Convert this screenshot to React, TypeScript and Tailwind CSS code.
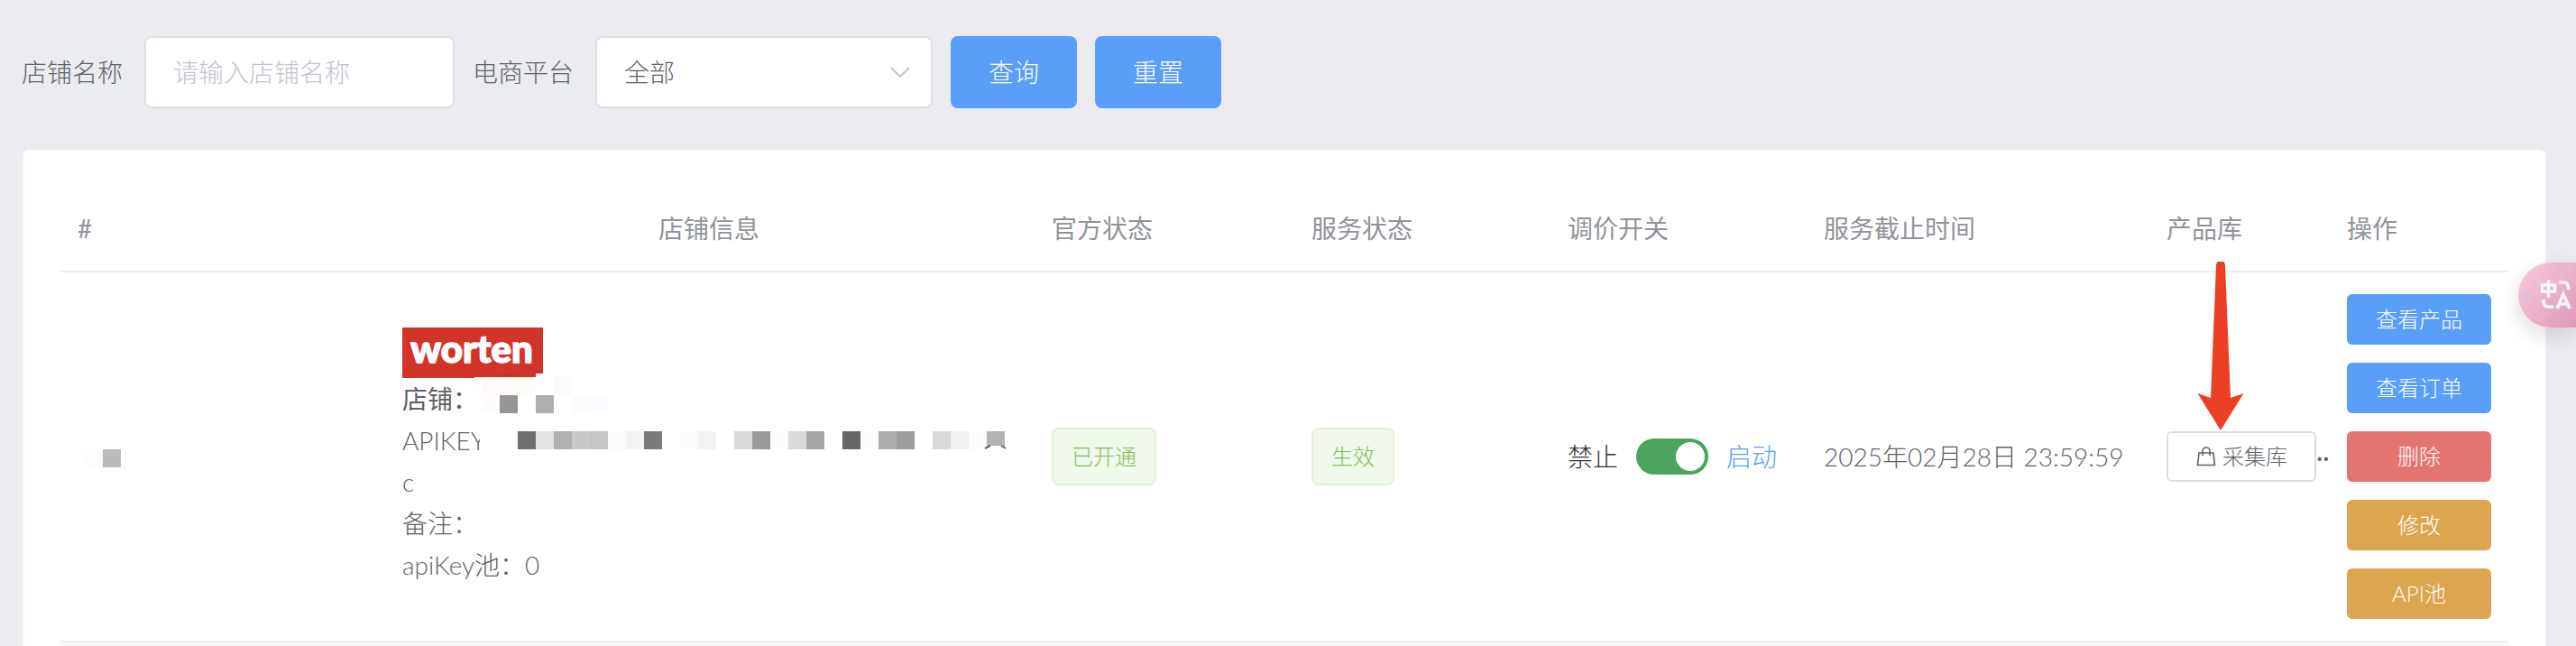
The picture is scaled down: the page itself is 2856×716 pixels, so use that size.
import { useState } from "react";
import type { ReactNode } from "react";

type Pixel = [x: number, y: number, fill: string];

const shopPixels: Pixel[] = [
  [88, 55, "#fff9f7"],
  [108, 55, "#fff9f7"],
  [128, 55, "#fdfdf7"],
  [168, 55, "#fbfbfb"],
  [88, 75, "#fcfcff"],
  [108, 75, "#969698"],
  [148, 75, "#aeaeb0"],
  [188, 75, "#fcfcff"],
  [208, 75, "#fbfbff"],
  [128, 115, "#6e6e70"],
  [148, 115, "#e4e4e6"],
  [168, 115, "#b0b0b2"],
  [188, 115, "#c9c9cb"],
  [208, 115, "#c6c6c8"],
  [228, 115, "#fbfbfe"],
  [248, 115, "#f4f4f7"],
  [268, 115, "#7a7a7c"],
  [308, 115, "#fcfcff"],
  [328, 115, "#f3f3f5"],
  [368, 115, "#d9d9db"],
  [388, 115, "#99999b"],
  [408, 115, "#fcfcff"],
  [428, 115, "#d9d9db"],
  [448, 115, "#a6a6a8"],
  [488, 115, "#676769"],
  [508, 115, "#fcfcff"],
  [528, 115, "#adadaf"],
  [548, 115, "#9c9c9e"],
  [588, 115, "#dadadc"],
  [608, 115, "#f1f1f3"],
  [628, 115, "#fcfcff"],
  [648, 115, "#b3b3b5"],
];

function WortenLogo() {
  return (
    <svg width="156" height="56" viewBox="0 0 156 56" role="img" aria-label="worten" className="block overflow-visible">
      <rect width="156" height="56" fill="#d33429" />
      <text
        x="77"
        y="39"
        textAnchor="middle"
        fill="#fff"
        stroke="#fff"
        strokeWidth="1.5"
        strokeLinejoin="round"
        className="font-['Lato',sans-serif] text-[42px] leading-none font-black"
      >
        worten
      </text>
    </svg>
  );
}

function ShopMask() {
  return (
    <svg
      width="680"
      height="286"
      viewBox="0 0 680 286"
      aria-hidden="true"
      shapeRendering="crispEdges"
      className="pointer-events-none absolute top-0 left-0"
    >
      <rect x="148" y="51" width="20" height="24" fill="#fff" />
      <rect x="80" y="55" width="68" height="2" fill="#fdf0ea" />
      <rect x="108" y="51" width="20" height="4" fill="#c63326" />
      <rect x="86" y="112" width="42" height="26" fill="#fff" />
      {shopPixels.map(([x, y, fill]) => (
        <rect key={`${x}-${y}`} x={x} y={y} width="20" height="20" fill={fill} />
      ))}
      <path d="M646 135 L651 131 H665 L670 135 Z" fill="#fff" />
      <path d="M646 134 l6 -3 M664 131 l5 3" stroke="#6e6e70" strokeWidth="2" shapeRendering="auto" />
    </svg>
  );
}

function Tag({ children }: { children: ReactNode }) {
  return (
    <span className="inline-flex h-16 items-center rounded-lg border-2 border-[#e3f1da] bg-[#f1f8ec] px-5 align-middle text-2xl text-[#7fc254]">
      {children}
    </span>
  );
}

const actions = [
  { label: "查看产品", color: "bg-[#599ef8]" },
  { label: "查看订单", color: "bg-[#599ef8]" },
  { label: "删除", color: "bg-[#e47470]" },
  { label: "修改", color: "bg-[#dca550]" },
  { label: "API池", color: "bg-[#dca550]" },
];

const th = "h-24 border-b-2 border-[#ebeef5] px-5 text-left font-normal";
const td = "border-b-2 border-[#ebeef5] px-5 py-6 align-middle";

export default function App() {
  const [enabled, setEnabled] = useState(true);

  return (
    <div className="relative flex h-screen flex-col overflow-hidden bg-[#eaecf0] pt-10 pr-8 pl-6 font-['Lato','Noto_Sans_CJK_SC',sans-serif] text-[28px] leading-[46px] font-light text-[#606266]">
      <form className="mb-11 flex shrink-0 items-center gap-5" onSubmit={(e) => e.preventDefault()}>
        <div className="flex items-center gap-6">
          <label htmlFor="shop">店铺名称</label>
          <input
            id="shop"
            type="text"
            placeholder="请输入店铺名称"
            className="h-20 w-[344px] rounded-lg border-2 border-[#dcdfe6] bg-white px-[30px] outline-none placeholder:text-[#c0c4cc]"
          />
        </div>
        <div className="flex items-center gap-6">
          <label htmlFor="platform">电商平台</label>
          <div className="relative">
            <select
              id="platform"
              className="block h-20 w-[374px] appearance-none rounded-lg border-2 border-[#dcdfe6] bg-white px-[30px] outline-none"
            >
              <option>全部</option>
            </select>
            <svg
              width="24"
              height="24"
              viewBox="0 0 24 24"
              aria-hidden="true"
              className="pointer-events-none absolute top-7 right-6"
            >
              <path d="M2 7 L12 17 L22 7" fill="none" stroke="#c0c4cc" strokeWidth="2" />
            </svg>
          </div>
        </div>
        <button type="submit" className="h-20 w-[140px] rounded-lg bg-[#599ef8] text-white">
          查询
        </button>
        <button type="reset" className="h-20 w-[140px] rounded-lg bg-[#599ef8] text-white">
          重置
        </button>
      </form>

      <main className="flex-1 rounded-t-lg border-2 border-b-0 border-[#ebeef5] bg-white p-10">
        <table className="w-full table-fixed border-separate border-spacing-0">
          <colgroup>
            <col className="w-[360px]" />
            <col />
            <col className="w-[288px]" />
            <col className="w-[284px]" />
            <col className="w-[284px]" />
            <col className="w-[380px]" />
            <col className="w-[200px]" />
            <col className="w-[200px]" />
          </colgroup>
          <thead className="text-[#909399]">
            <tr>
              <th className={th}>#</th>
              <th className="h-24 border-b-2 border-[#ebeef5] px-5 text-center font-normal">店铺信息</th>
              <th className={th}>官方状态</th>
              <th className={th}>服务状态</th>
              <th className={th}>调价开关</th>
              <th className={th}>服务截止时间</th>
              <th className={th}>产品库</th>
              <th className={th}>操作</th>
            </tr>
          </thead>
          <tbody>
            <tr>
              <td className={td}>
                <svg width="60" height="24" viewBox="0 0 60 24" aria-hidden="true" className="block">
                  <rect x="8" y="4" width="20" height="20" fill="#fdfdfe" />
                  <rect x="28" y="4" width="20" height="20" fill="#bababc" />
                </svg>
              </td>
              <td className={td}>
                <div className="relative">
                  <WortenLogo />
                  <p className="font-normal">店铺：</p>
                  <p>APIKEY</p>
                  <p>c</p>
                  <p>备注：</p>
                  <p>apiKey池：0</p>
                  <ShopMask />
                </div>
              </td>
              <td className={td}>
                <Tag>已开通</Tag>
              </td>
              <td className={td}>
                <Tag>生效</Tag>
              </td>
              <td className={td}>
                <div className="flex items-center gap-5">
                  <span className="text-[#303133]">禁止</span>
                  <button
                    type="button"
                    role="switch"
                    aria-checked={enabled}
                    aria-label="调价开关"
                    onClick={() => setEnabled(!enabled)}
                    className={
                      enabled
                        ? "flex h-10 w-20 items-center justify-end rounded-full bg-[#4ca55e] px-1"
                        : "flex h-10 w-20 items-center justify-start rounded-full bg-[#dcdfe6] px-1"
                    }
                  >
                    <span className="size-8 rounded-full bg-white" />
                  </button>
                  <span className="text-[#599ef8]">启动</span>
                </div>
              </td>
              <td className={td}>2025年02月28日 23:59:59</td>
              <td className="border-b-2 border-[#ebeef5] py-6 pl-5 align-middle">
                <div className="relative flex items-center">
                  <button
                    type="button"
                    className="flex h-14 shrink-0 items-center gap-1.5 rounded-md border-2 border-[#dcdfe6] bg-white px-[30px] text-2xl"
                  >
                    <svg width="24" height="24" viewBox="0 0 24 24" aria-hidden="true" fill="none" stroke="#606266" strokeWidth="1.6">
                      <path d="M4 8 H20 L21.5 21.5 H2.5 Z" />
                      <path d="M8 11 V6 A4 4 0 0 1 16 6 V11" />
                    </svg>
                    采集库
                  </button>
                  <span className="whitespace-nowrap font-normal">··</span>
                  <svg
                    width="52"
                    height="188"
                    viewBox="0 0 52 188"
                    aria-hidden="true"
                    className="pointer-events-none absolute bottom-full left-[34px]"
                  >
                    <path
                      d="M21 4 Q21.500 -1 26 -1 Q30.500 -1 31 4 L37 151 L51.500 146 L26 187 L0.500 146 L15 151 Z"
                      fill="#eb4026"
                    />
                  </svg>
                </div>
              </td>
              <td className={td}>
                <div className="flex flex-col gap-5">
                  {actions.map(({ label, color }) => (
                    <button key={label} type="button" className={`h-14 rounded-md text-2xl text-white ${color}`}>
                      {label}
                    </button>
                  ))}
                </div>
              </td>
            </tr>
            <tr>
              <td colSpan={8} className="h-24 bg-[#fafafa]" />
            </tr>
          </tbody>
        </table>
      </main>

      <button
        type="button"
        aria-label="翻译"
        className="absolute top-[291px] right-0 flex h-[72px] w-16 items-center rounded-l-full bg-linear-to-br from-[#f9c8dc] to-[#dd97b8] pl-6 opacity-95 shadow-[0_8px_24px_rgba(0,0,0,0.14)]"
      >
        <svg width="36" height="36" viewBox="0 0 36 36" aria-hidden="true" fill="none" stroke="#f8f5f8" strokeWidth="3.6">
          <path d="M2.500 7 H16.500 V14 H2.500 Z M9.500 1 V21" />
          <path d="M21 4 H26 Q31.500 4 31.500 9.500 V12" />
          <path d="M4 23 V25 Q4 31 10 31 H15" />
          <path d="M19 33 L26 17 L33 33 M21.500 28 H30.500" />
        </svg>
      </button>
    </div>
  );
}
